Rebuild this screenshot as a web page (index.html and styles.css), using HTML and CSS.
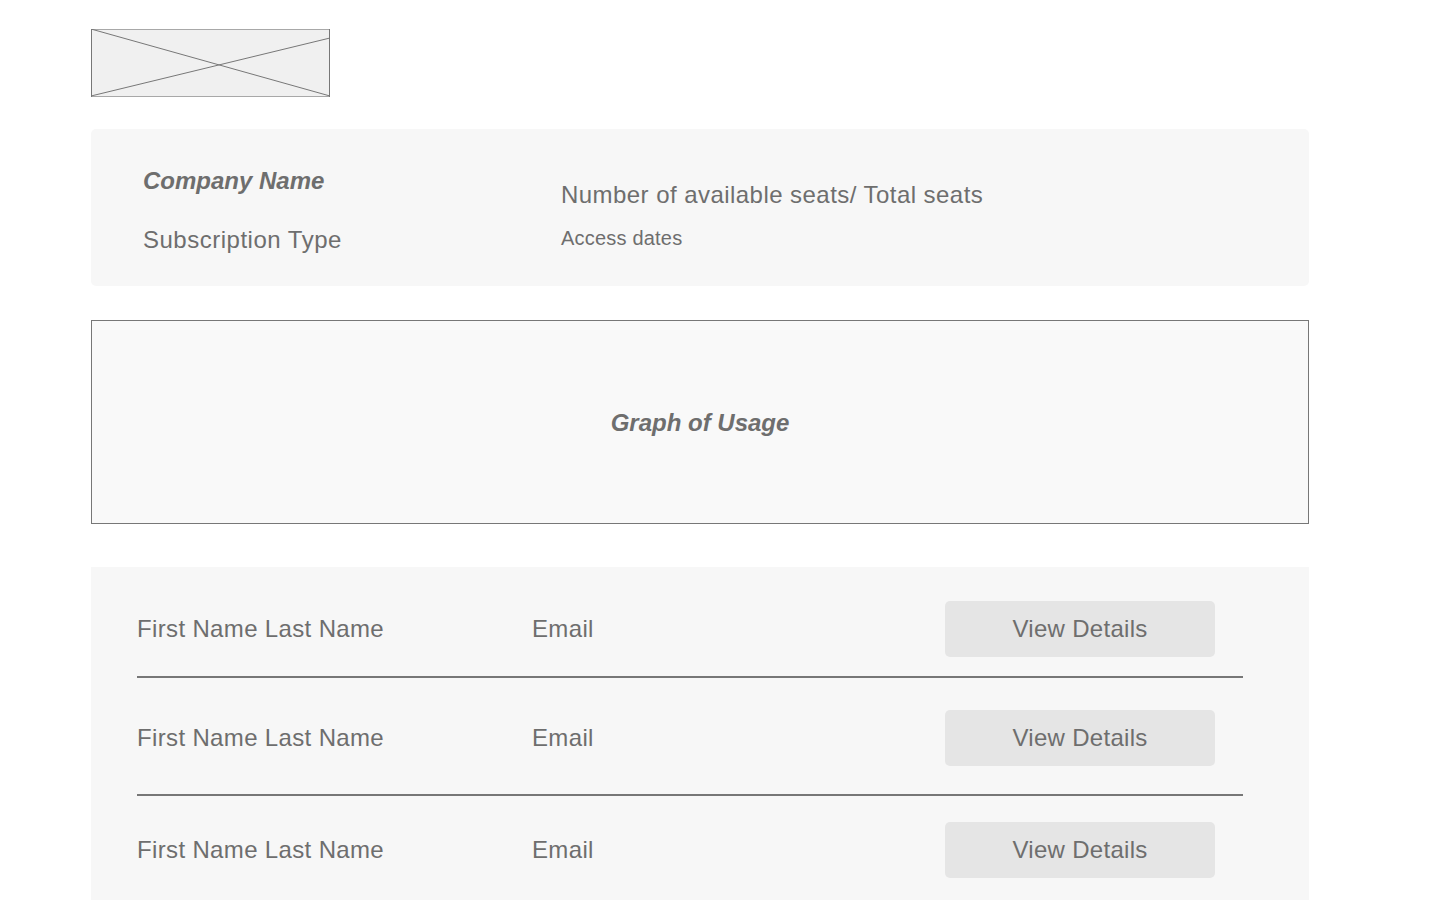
FILE: index.html
```html
<!DOCTYPE html>
<html lang="en">
<head>
<meta charset="utf-8">
<title>Company Dashboard</title>
<link rel="stylesheet" href="styles.css">
</head>
<body>
<div class="page">
  <div class="logo">
    <svg width="239" height="68" viewBox="0 0 239 68" preserveAspectRatio="none">
      <rect x="0" y="0" width="239" height="68" fill="#f0f0f0"/>
      <line x1="0" y1="0.5" x2="239" y2="0.5" stroke="#a8a8a8" stroke-width="1"/>
      <line x1="0" y1="67.5" x2="239" y2="67.5" stroke="#a8a8a8" stroke-width="1"/>
      <line x1="0.5" y1="0" x2="0.5" y2="68" stroke="#777" stroke-width="1"/>
      <line x1="238.5" y1="0" x2="238.5" y2="68" stroke="#777" stroke-width="1"/>
      <line x1="0" y1="0" x2="239" y2="67" stroke="#777" stroke-width="1"/>
      <line x1="0" y1="67" x2="239" y2="9" stroke="#777" stroke-width="1"/>
    </svg>
  </div>

  <section class="info-card">
    <div class="info-left">
      <div class="company">Company Name</div>
      <div class="subscription">Subscription Type</div>
    </div>
    <div class="info-right">
      <div class="seats">Number of available seats/ Total seats</div>
      <div class="dates">Access dates</div>
    </div>
  </section>

  <section class="graph">
    <div class="graph-label">Graph of Usage</div>
  </section>

  <section class="list-card">
    <div class="row">
      <div class="name">First Name Last Name</div>
      <div class="email">Email</div>
      <button class="btn">View Details</button>
    </div>
    <div class="divider"></div>
    <div class="row">
      <div class="name">First Name Last Name</div>
      <div class="email">Email</div>
      <button class="btn">View Details</button>
    </div>
    <div class="divider"></div>
    <div class="row">
      <div class="name">First Name Last Name</div>
      <div class="email">Email</div>
      <button class="btn">View Details</button>
    </div>
  </section>
</div>
</body>
</html>
```

FILE: styles.css
```css
* { box-sizing: border-box; }

html, body {
  margin: 0;
  padding: 0;
  background: #ffffff;
  height: 900px;
  overflow: hidden;
}

body {
  font-family: "Liberation Sans", Arial, Helvetica, sans-serif;
  color: #6e6e6e;
}

.page {
  width: 1218px;
  margin-left: 91px;
  padding-top: 29px;
}

.logo {
  width: 239px;
  height: 68px;
  line-height: 0;
}

.logo svg { display: block; }

.info-card {
  margin-top: 32px;
  background: #f7f7f7;
  border-radius: 5px;
  height: 157px;
  padding: 38px 52px 0 52px;
  display: grid;
  grid-template-columns: 418px 1fr;
}

.info-left {
  display: flex;
  flex-direction: column;
  gap: 31px;
}

.company {
  font-size: 24px;
  line-height: 28px;
  font-weight: bold;
  font-style: italic;
}

.subscription {
  font-size: 24px;
  line-height: 28px;
  letter-spacing: 0.5px;
}

.info-right {
  display: flex;
  flex-direction: column;
  padding-top: 14px;
  gap: 17px;
}

.seats {
  font-size: 24px;
  line-height: 28px;
  letter-spacing: 0.45px;
}

.dates {
  font-size: 20px;
  line-height: 24px;
  letter-spacing: 0.2px;
}

.graph {
  margin-top: 34px;
  height: 204px;
  background: #f9f9f9;
  border: 1px solid #777777;
  display: flex;
  align-items: center;
  justify-content: center;
}

.graph-label {
  font-size: 24px;
  line-height: 28px;
  font-weight: bold;
  font-style: italic;
  margin-top: 2px;
}

.list-card {
  margin-top: 43px;
  background: #f7f7f7;
  padding: 34px 66px 21px 46px;
  height: 333px;
}

.row {
  display: grid;
  grid-template-columns: 395px 1fr 270px;
  align-items: center;
  height: 56px;
  padding-right: 28px;
}

.name, .email {
  font-size: 24px;
  line-height: 28px;
  letter-spacing: 0.35px;
}

.btn {
  height: 56px;
  width: 270px;
  border: none;
  border-radius: 5px;
  background: #e5e5e5;
  color: #6e6e6e;
  font-family: "Liberation Sans", Arial, Helvetica, sans-serif;
  font-size: 24px;
  letter-spacing: 0.3px;
  padding: 0;
  cursor: pointer;
}

.divider {
  height: 2px;
  background: #777777;
  margin: 19px 0 32px 0;
}

.divider + .row + .divider {
  margin: 28px 0 26px 0;
}
```
